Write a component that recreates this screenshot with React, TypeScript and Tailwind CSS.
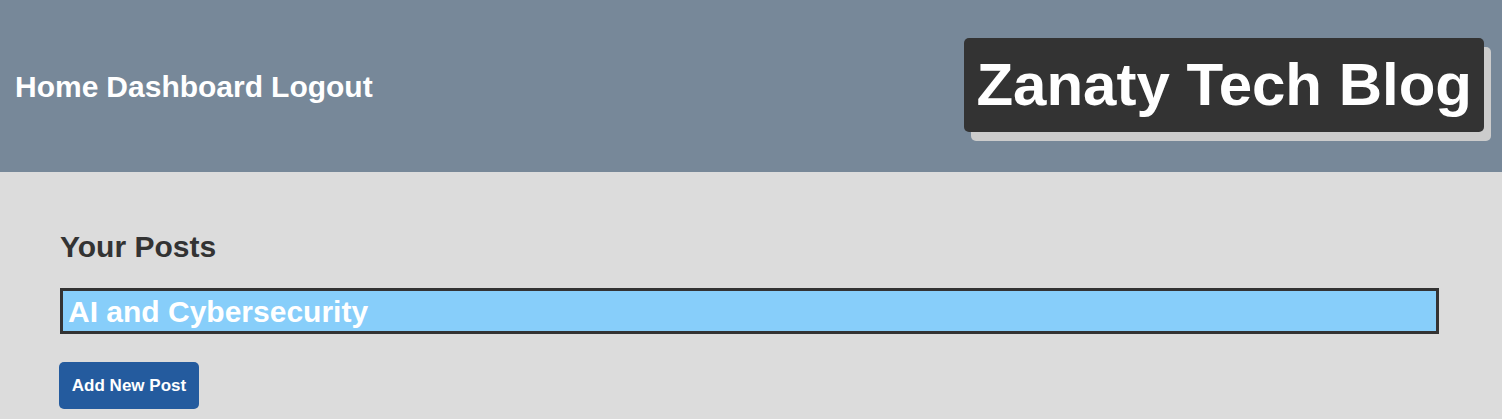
export default function App() {
  const posts = ["AI and Cybersecurity"];

  return (
    <div className="min-h-[419px] bg-[#dcdcdc] font-['Liberation_Sans',Arial,sans-serif]">
      <header className="flex h-[172px] items-center justify-between bg-[#778899] pl-[15px] pr-[18px]">
        <nav className="flex gap-[8px] text-[30px] font-bold text-white">
          <a href="#">Home</a>
          <a href="#">Dashboard</a>
          <a href="#">Logout</a>
        </nav>
        <h1 className="mb-[3px] rounded-[5px] bg-[#333333] px-[12px] py-[12px] text-[60px] font-bold leading-[70px] text-white shadow-[7px_9px_0_#cccccc]">
          Zanaty Tech Blog
        </h1>
      </header>

      <main className="px-[60px] pt-[58px]">
        <h2 className="text-[30px] font-bold leading-[33px] text-[#333333]">Your Posts</h2>
        <ul className="mt-[25px] mr-[3px] flex flex-col gap-2">
          {posts.map((title) => (
            <li
              key={title}
              className="flex h-[46px] items-center border-[3px] border-[#333333] bg-[#87cefa] pl-[5px] text-[30px] font-bold text-white"
            >
              {title}
            </li>
          ))}
        </ul>
        <button className="mt-[28px] -ml-px h-[47px] w-[140px] rounded-[5px] bg-[#245b9e] text-[17px] font-bold text-white">
          Add New Post
        </button>
      </main>
    </div>
  );
}
